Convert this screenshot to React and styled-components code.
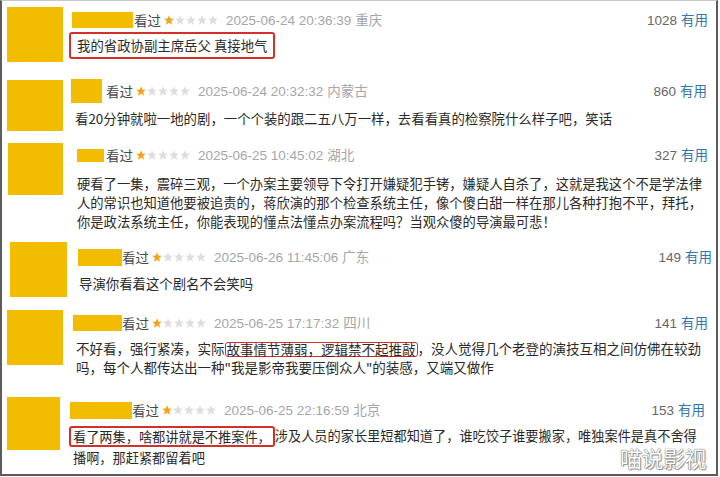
import React from "react";
import styled, { createGlobalStyle } from "styled-components";

const GlobalStyle = createGlobalStyle`
  html, body {
    margin: 0;
    padding: 0;
    background: #fff;
  }
  body {
    font-family: "Noto Sans CJK SC", "Liberation Sans", sans-serif;
  }
`;

const Frame = styled.div`
  position: relative;
  width: 718px;
  height: 476px;
  box-sizing: border-box;
  border-left: 2px solid #5c5c5c;
  border-right: 2px solid #5c5c5c;
  border-bottom: 2px solid #5c5c5c;
  border-top: 1px solid #c8c8c8;
  background: #fff;
  overflow: hidden;
`;

const Card = styled.div`
  display: flex;
  align-items: flex-start;
  box-sizing: border-box;
  height: ${(p) => p.$h}px;
  padding-left: ${(p) => p.$pl}px;
  padding-right: ${(p) => p.$pr}px;
`;

const Avatar = styled.div`
  flex-shrink: 0;
  width: ${(p) => p.$w}px;
  height: ${(p) => p.$h}px;
  margin-top: ${(p) => p.$top}px;
  background: #f2bc00;
`;

const Body = styled.div`
  flex: 1;
  min-width: 0;
  margin-left: ${(p) => p.$ml}px;
  padding-top: ${(p) => p.$pt}px;
`;

const Header = styled.div`
  display: flex;
  align-items: center;
  height: 16px;
  white-space: nowrap;
`;

const NameBlock = styled.div`
  flex-shrink: 0;
  width: ${(p) => p.$w}px;
  height: ${(p) => p.$h}px;
  margin-right: ${(p) => p.$gap}px;
  background: #f2bc00;
`;

const Seen = styled.span`
  font-size: 13.5px;
  line-height: 16px;
  color: #494949;
`;

const Stars = styled.span`
  display: flex;
  gap: 1px;
  margin: 0 8px 0 3px;
`;

const Meta = styled.span`
  font-family: "Liberation Sans", "Noto Sans CJK SC", sans-serif;
  font-size: 13.5px;
  line-height: 16px;
  color: #a6a6a6;
`;

const Loc = styled.span`
  margin-left: 4px;
  font-family: "Noto Sans CJK SC", sans-serif;
`;

const Votes = styled.span`
  margin-left: auto;
  font-family: "Liberation Sans", "Noto Sans CJK SC", sans-serif;
  font-size: 13.5px;
  line-height: 16px;
  color: #666;
`;

const Useful = styled.span`
  margin-left: 4px;
  font-family: "Noto Sans CJK SC", sans-serif;
  color: #3377aa;
`;

const Comment = styled.div`
  margin-top: ${(p) => p.$mt}px;
  padding-left: ${(p) => p.$indent}px;
  font-size: ${(p) => p.$fs}px;
  line-height: ${(p) => p.$lh}px;
  color: #2a2a2a;
`;

const Line = styled.div`
  white-space: nowrap;
  height: ${(p) => p.$lh}px;
`;

const Mark = styled.span`
  display: inline-block;
  box-sizing: border-box;
  border: ${(p) => p.$bw}px solid #d3302c;
  border-radius: 3px;
  line-height: ${(p) => p.$lh}px;
  padding: ${(p) => p.$py}px ${(p) => p.$px}px;
  margin-left: ${(p) => (p.$lead ? -(p.$px + p.$bw) : 0)}px;
  vertical-align: ${(p) => (p.$lead && p.$py > 0 ? "top" : "middle")};
`;

const Watermark = styled.div`
  position: absolute;
  right: 10px;
  bottom: 4px;
  font-size: 22px;
  line-height: 26px;
  letter-spacing: -0.5px;
  color: #fff;
  text-shadow: 0 0 1px #666, 0 0 1px #666, 1px 1px 1px rgba(0, 0, 0, 0.4);
`;

const Star = ({ on }) => (
  <svg width="10" height="10" viewBox="0 0 10 10">
    <polygon
      points="5,0.2 6.35,3.5 9.9,3.7 7.15,6.05 8.1,9.7 5,7.75 1.9,9.7 2.85,6.05 0.1,3.7 3.65,3.5"
      fill={on ? "#f5a31a" : "#dedede"}
    />
  </svg>
);

const markStyles = {
  big: { bw: 2, px: 6, py: 2, lh: 19 },
  inline: { bw: 1.5, px: 1, py: 0, lh: 13 },
  lead: { bw: 2, px: 2, py: 0, lh: 17 },
};

const rows = [
  {
    h: 74, av: [7, 6, 56, 55], hy: 11, name: [72, 61, 16, 1],
    date: "2025-06-24 20:36:39", loc: "重庆", votes: 1028, right: 708,
    top: 31, lh: 27, indent: 5, fs: 13.4,
    lines: [[["我的省政协副主席岳父 真接地气", "big"]]],
  },
  {
    h: 65, av: [7, 5, 56, 51], hy: 8, name: [71, 31, 24, 4],
    date: "2025-06-24 20:32:32", loc: "内蒙古", votes: 860, right: 707,
    top: 33.5, lh: 19, indent: 4, fs: 13.4,
    lines: [["看20分钟就啦一地的剧，一个个装的跟二五八万一样，去看看真的检察院什么样子吧，笑话"]],
  },
  {
    h: 95, av: [8, 3, 55, 52], hy: 7, name: [77, 27, 13, 2],
    date: "2025-06-25 10:45:02", loc: "湖北", votes: 327, right: 708,
    top: 33.5, lh: 19, indent: 0, fs: 13.3,
    lines: [
      ["硬看了一集，震碎三观，一个办案主要领导下令打开嫌疑犯手铐，嫌疑人自杀了，这就是我这个不是学法律"],
      ["人的常识也知道他要被追责的，蒋欣演的那个检查系统主任，像个傻白甜一样在那儿各种打抱不平，拜托，"],
      ["你是政法系统主任，你能表现的懂点法懂点办案流程吗？当观众傻的导演最可悲！"],
    ],
  },
  {
    h: 70, av: [10, 7, 57, 55], hy: 14, name: [78, 44, 17, 0],
    date: "2025-06-26 11:45:06", loc: "广东", votes: 149, right: 712,
    top: 38.5, lh: 19, indent: 1, fs: 13.4,
    lines: [["导演你看着这个剧名不会笑吗"]],
  },
  {
    h: 85, av: [7, 5, 56, 55], hy: 10, name: [73, 49, 16, 0],
    date: "2025-06-25 17:17:32", loc: "四川", votes: 141, right: 708,
    top: 33.5, lh: 19, indent: 3, fs: 13.5,
    lines: [
      ["不好看，强行紧凑，实际", ["故事情节薄弱，逻辑禁不起推敲", "inline"], "，没人觉得几个老登的演技互相之间仿佛在较劲"],
      ["吗，每个人都传达出一种\"我是影帝我要压倒众人\"的装感，又端又做作"],
    ],
  },
  {
    h: 84, av: [7, 7, 53, 53], hy: 12, name: [70, 62, 17, 0],
    date: "2025-06-25 22:16:59", loc: "北京", votes: 153, right: 705,
    top: 34.5, lh: 22, indent: 3, fs: 13.2,
    lines: [
      [["看了两集，啥都讲就是不推案件，", "lead"], "涉及人员的家长里短都知道了，谁吃饺子谁要搬家，唯独案件是真不舍得"],
      ["播啊，那赶紧都留着吧"],
    ],
  },
];

const Review = ({ row }) => {
  const [ax, ay, aw, ah] = row.av;
  const [nx, nw, nh, gap] = row.name;
  return (
    <Card $h={row.h} $pl={ax - 2} $pr={716 - row.right}>
      <Avatar $w={aw} $h={ah} $top={ay} />
      <Body $ml={nx - (ax + aw)} $pt={row.hy}>
        <Header>
          <NameBlock $w={nw} $h={nh} $gap={gap} />
          <Seen>看过</Seen>
          <Stars>
            {[0, 1, 2, 3, 4].map((i) => (
              <Star key={i} on={i === 0} />
            ))}
          </Stars>
          <Meta>
            {row.date}
            <Loc>{row.loc}</Loc>
          </Meta>
          <Votes>
            {row.votes}
            <Useful>有用</Useful>
          </Votes>
        </Header>
        <Comment $mt={row.top - (row.hy + 16)} $indent={row.indent} $fs={row.fs} $lh={row.lh}>
          {row.lines.map((segs, i) => (
            <Line key={i} $lh={row.lh}>
              {segs.map((seg, j) => {
                if (typeof seg === "string") return <span key={j}>{seg}</span>;
                const m = markStyles[seg[1]];
                return (
                  <Mark key={j} $bw={m.bw} $px={m.px} $py={m.py} $lh={m.lh} $lead={seg[1] !== "inline"}>
                    {seg[0]}
                  </Mark>
                );
              })}
            </Line>
          ))}
        </Comment>
      </Body>
    </Card>
  );
};

const App = () => (
  <>
    <GlobalStyle />
    <Frame>
      {rows.map((row) => (
        <Review key={row.date} row={row} />
      ))}
      <Watermark>喵说影视</Watermark>
    </Frame>
  </>
);

export default App;
